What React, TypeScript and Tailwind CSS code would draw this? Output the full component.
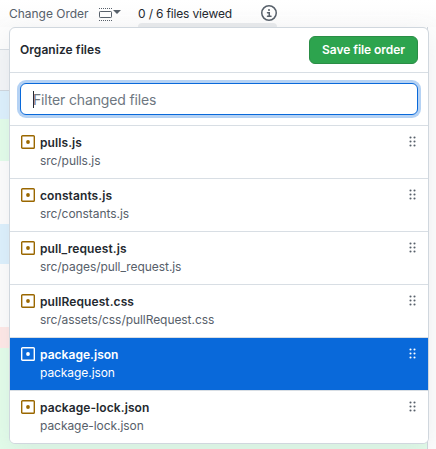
type FileEntry = { name: string; path: string; selected?: boolean };

const files: FileEntry[] = [
  { name: 'pulls.js', path: 'src/pulls.js' },
  { name: 'constants.js', path: 'src/constants.js' },
  { name: 'pull_request.js', path: 'src/pages/pull_request.js' },
  { name: 'pullRequest.css', path: 'src/assets/css/pullRequest.css' },
  { name: 'package.json', path: 'package.json', selected: true },
  { name: 'package-lock.json', path: 'package-lock.json' },
];

function ModifiedIcon() {
  return (
    <svg className="mt-px h-3.5 w-3.5 shrink-0" viewBox="0 0 14 14" fill="none">
      <rect x="0.7" y="0.7" width="12.6" height="12.6" rx="0.9" stroke="currentColor" strokeWidth="1.4" />
      <circle cx="7" cy="7" r="1.9" fill="currentColor" />
    </svg>
  );
}

function Grabber() {
  return (
    <svg className="h-[11px] w-[7px] shrink-0" viewBox="0 0 7 11" fill="currentColor">
      {[1.5, 5.5, 9.5].map((y) => (
        <g key={y}>
          <circle cx="1.5" cy={y} r="1.05" />
          <circle cx="5.5" cy={y} r="1.05" />
        </g>
      ))}
    </svg>
  );
}

/* Diff shown behind the popover */
function DiffBackground() {
  return (
    <div className="flex h-[449px] w-[428px] flex-col border-r border-[#d0d7de] bg-[#fdfdfd]">
      <div className="h-[50px] shrink-0 border-b border-[#d8dee4]" />
      <div className="h-[41px] shrink-0 border-b border-[#d0d7de] bg-[#f4f6f8]" />
      <div className="h-7 shrink-0 bg-[#ddf1fd]" />
      <div className="h-[42px] shrink-0 bg-[#e3fdea]" />
      <div className="h-[63px] shrink-0" />
      <div className="h-10 shrink-0 bg-[#ddf1fd]" />
      <div className="h-[63px] shrink-0" />
      <div className="h-[21px] shrink-0 bg-[#ffe9e7]" />
      <div className="grow bg-[#e3fdea]" />
    </div>
  );
}

function Toolbar() {
  return (
    <div className="absolute inset-x-0 top-0 flex h-[27px] bg-gradient-to-b from-white to-[#fbfbfb] text-[12px] leading-[27px]">
      <span className="ml-[9px] w-[90px] tracking-[-0.02px] text-[#57606a]">Change Order</span>
      <svg className="mt-2 h-[13px] w-[22px] text-[#57606a]" viewBox="0 0 22 13" fill="none">
        <path d="M0 .5h13M0 12.5h13" stroke="currentColor" strokeDasharray="1 1" />
        <rect x=".5" y="3.5" width="12" height="6" rx=".7" stroke="currentColor" />
        <path d="M14 2h8l-4 4z" fill="currentColor" />
      </svg>
      <div className="ml-[17px] flex w-[139px] flex-col">
        <div className="flex h-[23px] justify-between">
          <span className="whitespace-pre tracking-[-0.16px] text-[#24292f]">0 / 6 files viewed</span>
          <svg className="mt-[5px] h-4 w-4 text-[#57606a]" viewBox="0 0 16 16" fill="none">
            <circle cx="8" cy="8" r="7.25" stroke="currentColor" strokeWidth="1.5" />
            <circle cx="8" cy="5" r="1" fill="currentColor" />
            <path d="M6.5 7.75h1.75v3.5M6.5 11.25h3.5" stroke="currentColor" strokeWidth="1.5" strokeLinecap="round" />
          </svg>
        </div>
        <div className="h-1 rounded-t bg-[#e8eaec]" />
      </div>
    </div>
  );
}

function FileRow({ file }: { file: FileEntry }) {
  return (
    <li
      className={
        file.selected
          ? 'flex h-[53px] border-b border-[#d8dee4] bg-[#0969da] pt-2 pr-[12px] pl-[11px] text-white'
          : 'flex h-[53px] border-b border-[#d8dee4] bg-white pt-2 pr-[12px] pl-[11px] last:h-[52px] last:border-b-0'
      }
    >
      <span className={file.selected ? 'text-white' : 'text-[#9a6700]'}>
        <ModifiedIcon />
      </span>
      <div className="ml-[5px] grow text-[12px] leading-[18px]">
        <div className={file.selected ? 'font-semibold tracking-[0.04px]' : 'font-semibold tracking-[0.09px] text-[#24292f]'}>
          {file.name}
        </div>
        <div className={file.selected ? 'tracking-[-0.07px]' : 'tracking-[-0.06px] text-[#57606a]'}>{file.path}</div>
      </div>
      <span className={file.selected ? 'mt-0.5 text-white' : 'mt-0.5 text-[#57606a]'}>
        <Grabber />
      </span>
    </li>
  );
}

export default function App() {
  return (
    <div className="relative h-[449px] w-[436px] overflow-hidden bg-[#fdfdfd] font-['Inter','Liberation_Sans',sans-serif]">
      <DiffBackground />
      <Toolbar />
      <section className="absolute top-[27px] left-[9px] w-[420px] overflow-hidden rounded-md border border-[#d0d7de] bg-white shadow-[0_8px_24px_rgba(140,149,159,0.15)]">
        <header className="flex h-[45px] items-center justify-between border-b border-[#d8dee4] px-2.5">
          <h1 className="text-[12px] font-semibold tracking-[0.06px] text-[#24292f]">Organize files</h1>
          <button className="h-7 w-[109px] rounded-md border border-[#2a8d46] bg-[#2da44e] text-[12px] font-semibold tracking-[-0.06px] text-white">
            Save file order
          </button>
        </header>
        <div className="h-[53px] border-b border-[#d8dee4] px-2.5 pt-2.5">
          <div className="flex h-8 items-center rounded-md border border-[#0969da] bg-white pl-3 shadow-[0_0_0_3px_rgba(9,105,218,0.3)]">
            <span className="h-[17px] w-px bg-[#24292f]" />
            <span className="-ml-px text-[14px] tracking-[-0.15px] text-[#6e7781]">Filter changed files</span>
          </div>
        </div>
        <ul>
          {files.map((file) => (
            <FileRow key={file.name} file={file} />
          ))}
        </ul>
      </section>
    </div>
  );
}
